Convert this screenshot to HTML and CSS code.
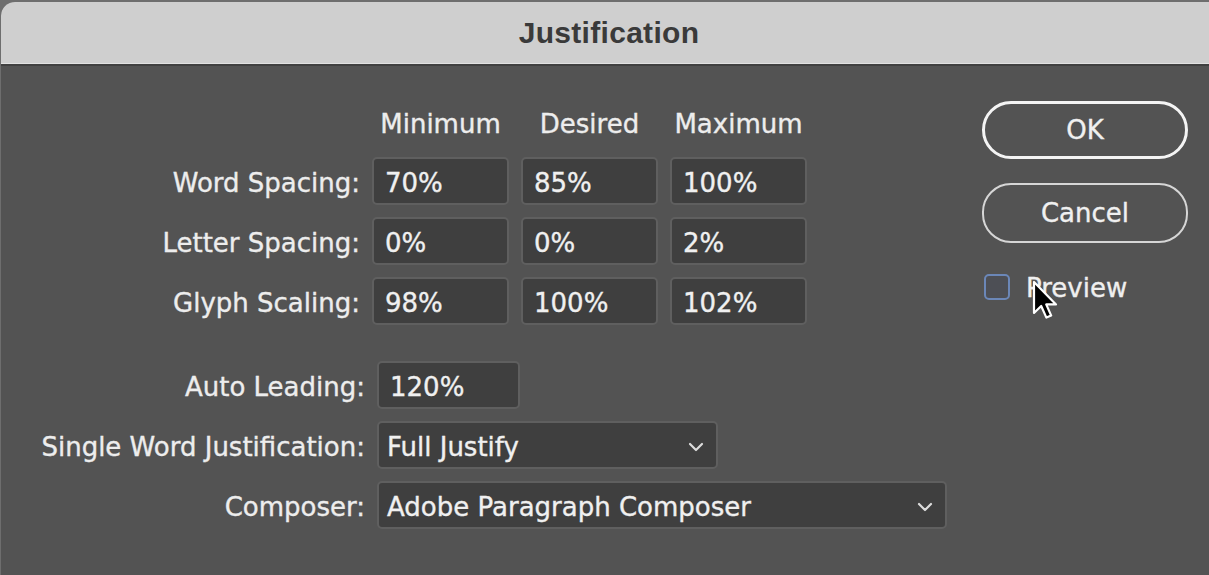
FILE: index.html
```html
<!DOCTYPE html>
<html>
<head>
<meta charset="utf-8">
<link rel="stylesheet" href="styles.css">
</head>
<body>
<div class="window">
  <div class="titlebar"><span class="title">Justification</span></div>
  <div class="content">
    <div class="form">
      <div class="grid grid-top">
        <div></div>
        <div class="colhead">Minimum</div>
        <div class="colhead">Desired</div>
        <div class="colhead">Maximum</div>

        <div class="label">Word Spacing:</div>
        <div class="field">70%</div>
        <div class="field">85%</div>
        <div class="field">100%</div>

        <div class="label">Letter Spacing:</div>
        <div class="field">0%</div>
        <div class="field">0%</div>
        <div class="field">2%</div>

        <div class="label">Glyph Scaling:</div>
        <div class="field">98%</div>
        <div class="field">100%</div>
        <div class="field">102%</div>
      </div>

      <div class="grid grid-bottom">
        <div class="label">Auto Leading:</div>
        <div class="field field-leading">120%</div>

        <div class="label">Single Word Justification:</div>
        <div class="field select select-single">
          <span>Full Justify</span>
          <svg class="chev" width="16" height="10" viewBox="0 0 16 10"><path d="M2 2 L8 8 L14 2" fill="none" stroke="#dcdcdc" stroke-width="2.2" stroke-linecap="round" stroke-linejoin="round"/></svg>
        </div>

        <div class="label">Composer:</div>
        <div class="field select select-composer">
          <span>Adobe Paragraph Composer</span>
          <svg class="chev" width="16" height="10" viewBox="0 0 16 10"><path d="M2 2 L8 8 L14 2" fill="none" stroke="#dcdcdc" stroke-width="2.2" stroke-linecap="round" stroke-linejoin="round"/></svg>
        </div>
      </div>
    </div>

    <div class="side">
      <div class="btn btn-ok">OK</div>
      <div class="btn btn-cancel">Cancel</div>
      <div class="check">
        <span class="box"></span>
        <span class="check-label">Preview</span>
        <svg class="cursor" width="26" height="40" viewBox="0 0 13 20">
          <path d="M1 1 L1 16.5 L4.6 13 L7.2 18.8 L9.6 17.8 L7.1 12.2 L12 12.2 Z" fill="#000" stroke="#fff" stroke-width="1.1" stroke-linejoin="round"/>
        </svg>
      </div>
    </div>
  </div>
</div>
</body>
</html>
```

FILE: styles.css
```css
html, body {
  margin: 0;
  padding: 0;
  background: #6e6e6e;
}

body {
  width: 1209px;
  height: 575px;
  overflow: hidden;
  font-family: "DejaVu Sans", "Open Sans", sans-serif;
}

.window {
  margin-top: 2px;
  margin-left: 1px;
  height: 573px;
  background: #535353;
  border-top-left-radius: 14px;
  overflow: hidden;
  display: flex;
  flex-direction: column;
}

.titlebar {
  height: 61px;
  background: #cfcfcf;
  border-bottom: 1px solid #e2e2e2;
  box-shadow: 0 2px 0 #404040;
  display: flex;
  align-items: center;
  justify-content: center;
}

.title {
  font-family: "Liberation Sans", Arial, sans-serif;
  font-weight: bold;
  font-size: 30px;
  color: #3a3a3a;
  padding-left: 8px;
  letter-spacing: 0.3px;
}

.content {
  flex: 1;
  display: flex;
  justify-content: space-between;
  padding-top: 35px;
}

.form {
  display: flex;
  flex-direction: column;
}

.grid {
  display: grid;
  column-gap: 12px;
  row-gap: 12px;
  align-items: center;
}

.grid-top {
  grid-template-columns: 359px 137px 137px 137px;
  grid-template-rows: 46px 48px 48px 48px;
}

.grid-bottom {
  margin-top: 36px;
  grid-template-columns: 364px auto;
  grid-template-rows: 48px 48px 48px;
  justify-items: start;
}

.colhead,
.label,
.field,
.btn,
.check-label {
  font-size: 26px;
  color: #ededed;
  white-space: nowrap;
  -webkit-text-stroke: 0.35px currentColor;
}

.colhead {
  text-align: center;
  padding-top: 4px;
}

.label {
  justify-self: end;
  text-align: right;
  padding-top: 4px;
}

.field {
  box-sizing: border-box;
  height: 48px;
  background: #3f3f3f;
  border: 2px solid #5f5f5f;
  border-radius: 5px;
  padding-left: 11px;
  padding-top: 3px;
  display: flex;
  align-items: center;
  color: #f0f0f0;
}

.field-leading {
  width: 143px;
}

.select {
  justify-content: space-between;
  padding-left: 8px;
  padding-right: 12px;
}

.select-single {
  width: 341px;
}

.select-composer {
  width: 570px;
}

.side {
  width: 206px;
  margin-right: 21px;
  display: flex;
  flex-direction: column;
  padding-top: 2px;
}

.btn {
  box-sizing: border-box;
  height: 58px;
  border-radius: 29px;
  display: flex;
  align-items: center;
  justify-content: center;
  color: #f0f0f0;
}

.btn-ok {
  border: 3px solid #f4f4f4;
}

.btn-cancel {
  margin-top: 24px;
  height: 60px;
  border: 2px solid #d6d6d6;
}

.check {
  position: relative;
  margin-top: 27px;
  display: flex;
  align-items: center;
  padding-left: 2px;
}

.box {
  box-sizing: border-box;
  width: 26px;
  height: 26px;
  border: 2px solid #6b87b8;
  border-radius: 5px;
  background: #4d4f55;
}

.check-label {
  margin-left: 16px;
  color: #efefef;
  padding-top: 3px;
}

.cursor {
  position: absolute;
  left: 50px;
  top: 10px;
}
```
